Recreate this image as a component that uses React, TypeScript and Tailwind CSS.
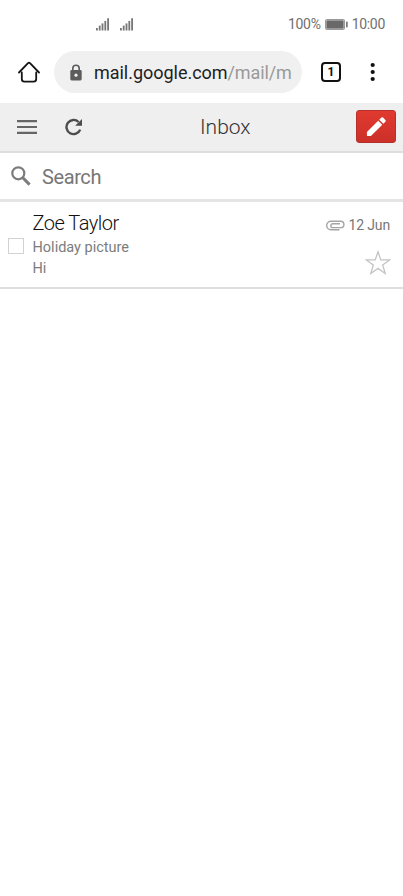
import React from "react";

const SignalBars = () => (
  <svg width="14" height="13" viewBox="0 0 14 13" fill="#777777">
    <rect x="0" y="10" width="1.8" height="2.5" />
    <rect x="2.8" y="7.6" width="1.8" height="4.9" />
    <rect x="5.6" y="5.4" width="1.8" height="7.1" />
    <rect x="8.4" y="3" width="1.8" height="9.5" />
    <rect x="11.2" y="0.2" width="1.8" height="12.3" />
  </svg>
);

const StatusBar = () => (
  <div className="flex h-[46px] items-center pt-[3px] pl-24 pr-[18px] text-[14px] tracking-[-0.3px] text-[#707070]">
    <div className="flex gap-[10px]">
      <SignalBars />
      <SignalBars />
    </div>
    <span className="ml-auto">100%</span>
    <svg className="mr-[3px] ml-[4px]" width="24" height="11" viewBox="0 0 24 11">
      <rect x="0.5" y="0.5" width="19" height="10" rx="1" fill="#cccccc" stroke="#999999" />
      <rect x="1.5" y="1.5" width="17" height="8" fill="#696969" />
      <rect x="21" y="2.5" width="1.7" height="6" rx="0.7" fill="#777777" />
    </svg>
    <span>10:00</span>
  </div>
);

const BrowserBar = () => (
  <div className="flex h-[57px] items-center pb-[5px] pl-[18px]">
    <svg width="22" height="22" viewBox="0 0 22 22" fill="none" stroke="#151515" strokeWidth="1.8" strokeLinecap="round" strokeLinejoin="round">
      <path d="M1 11.5 10 2.2Q11 1.3 12 2.2L21 11.5M3.8 11.5V18Q3.8 20.6 6.4 20.6H15.6Q18.2 20.6 18.2 18V11.5" />
    </svg>
    <div className="ml-[14px] flex h-[42px] w-[248px] items-center rounded-full bg-[#f0f0f0] pl-4">
      <svg width="12" height="17" viewBox="0 0 12 17">
        <path d="M2.8 7V4.5a3.2 3.2 0 0 1 6.4 0V7" fill="none" stroke="#5c5c5c" strokeWidth="1.6" />
        <rect x="0.3" y="6" width="11.4" height="10.4" rx="1.4" fill="#5c5c5c" />
        <circle cx="6" cy="11.2" r="1.6" fill="#f0f0f0" />
      </svg>
      <span className="ml-3 text-[18px] tracking-[-0.03px] whitespace-nowrap text-[#202124]">
        mail.google.com<span className="tracking-[-0.1px] text-[#999999]">/mail/m</span>
      </span>
    </div>
    <div className="ml-[19px] flex h-5 w-5 items-center justify-center rounded-[4px] border-2 border-[#111111] text-[12px] font-bold text-[#111111]">
      1
    </div>
    <svg className="ml-[29px]" width="6" height="20" viewBox="0 0 6 20" fill="#111111">
      <circle cx="2.7" cy="3" r="2.1" />
      <circle cx="2.7" cy="10" r="2.1" />
      <circle cx="2.7" cy="17" r="2.1" />
    </svg>
  </div>
);

const InboxHeader = () => (
  <div className="flex h-[50px] items-center border-b-2 border-[#dedede] bg-[#efefef] pl-[17px] pr-[7px]">
    <svg width="20" height="14" viewBox="0 0 20 14" stroke="#666666" strokeWidth="2.2">
      <path d="M0 1.2H20M0 7H20M0 12.8H20" />
    </svg>
    <svg className="ml-7" width="18" height="18" viewBox="0 0 18 18">
      <path d="M13.6 4A7.1 7.1 0 1 0 15.2 11.6" fill="none" stroke="#4d4d4d" strokeWidth="2.4" />
      <path d="M17 1V7.8H10.2Z" fill="#4d4d4d" />
    </svg>
    <h1 className="ml-[117px] pt-px text-[21px] font-light text-[#333333]">Inbox</h1>
    <div className="mb-px ml-auto flex h-[33px] w-10 items-center justify-center rounded-[3px] border border-[#b5302a] bg-linear-to-b from-[#e03a30] to-[#cc3028]">
      <svg width="21" height="21" viewBox="0 0 22 22" fill="#ffffff">
        <path d="M1 21V16.8L12.8 5L17 9.2L5.2 21Z" />
        <path d="M13.9 3.9L16.1 1.7Q17 .8 17.9 1.7L20.3 4.1Q21.2 5 20.3 5.9L18.1 8.1Z" />
      </svg>
    </div>
  </div>
);

const SearchBar = () => (
  <div className="flex h-[49px] items-center border-b-[3px] border-[#e4e4e4] pl-[11px]">
    <svg className="mt-px" width="21" height="21" viewBox="0 0 21 21" fill="none" stroke="#7b7b7b">
      <circle cx="7.3" cy="7.3" r="6" strokeWidth="2.2" />
      <path d="M11.8 11.8L18.6 18.6" strokeWidth="3" />
    </svg>
    <span className="ml-[10px] pt-px text-[20px] tracking-[-0.4px] text-[#777777]">Search</span>
  </div>
);

const MailRow = () => (
  <div className="flex h-[87px] border-b-2 border-[#dedede] pl-2">
    <div className="mt-[36px] h-4 w-4 border border-[#d2d2d2]" />
    <div className="ml-[8.5px] pt-[8px]">
      <div className="text-[20px] leading-[27px] font-light tracking-[-0.5px] text-[#111111]">Zoe Taylor</div>
      <div className="text-[14.5px] leading-[21px] text-[#7c7c7c]">Holiday picture</div>
      <div className="text-[14.5px] leading-[21px] text-[#7c7c7c]">Hi</div>
    </div>
    <div className="ml-auto flex flex-col items-end pt-[13px]">
      <div className="flex items-center pr-[13px]">
        <svg width="19" height="11" viewBox="0 0 19 11" fill="none" stroke="#a5a5a5" strokeWidth="1.4">
          <path d="M13.5 9.8H5A4.3 4.3 0 0 1 5 1.2H14.7A3.2 3.2 0 0 1 14.7 7.6H6.8A1.9 1.9 0 0 1 6.8 3.8H14" />
        </svg>
        <span className="ml-1 text-[14px] leading-5 tracking-[-0.15px] text-[#777777]">12 Jun</span>
      </div>
      <svg className="mt-[15px] mr-3" width="26" height="26" viewBox="0 0 26 26" fill="none" stroke="#c4c4c4" strokeWidth="1.3">
        <path d="M13 1.8L15.8 9.9H24.6L17.7 15L20.2 23.5L13 18.4L5.8 23.5L8.3 15L1.4 9.9H10.2Z" />
      </svg>
    </div>
  </div>
);

const App = () => {
  return (
    <div className="min-h-screen w-full overflow-hidden bg-white font-['Roboto',sans-serif]">
      <StatusBar />
      <BrowserBar />
      <InboxHeader />
      <SearchBar />
      <MailRow />
    </div>
  );
};

export default App;
